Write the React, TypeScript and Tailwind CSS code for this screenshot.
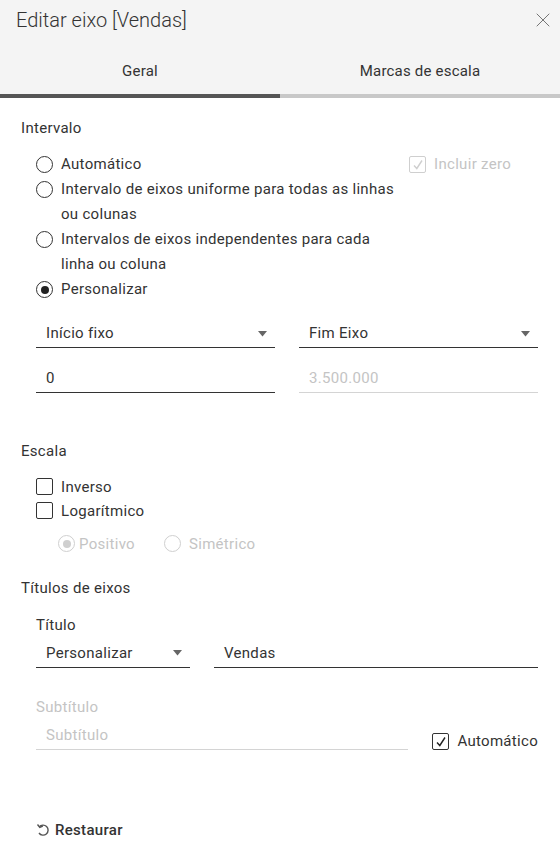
import { X } from "lucide-react";

const font = { fontFamily: "Roboto, 'Liberation Sans', sans-serif" };

function Radio({ checked, disabled }: { checked?: boolean; disabled?: boolean }) {
  return (
    <span
      className={`flex h-[17px] w-[17px] shrink-0 items-center justify-center rounded-full border ${
        disabled ? "border-[#cfcfcf]" : "border-[#333]"
      }`}
    >
      {checked && <span className={`h-[8px] w-[8px] rounded-full ${disabled ? "bg-[#cfcfcf]" : "bg-[#222]"}`} />}
    </span>
  );
}

function Checkbox({ checked, disabled }: { checked?: boolean; disabled?: boolean }) {
  return (
    <span
      className={`flex h-[17px] w-[17px] shrink-0 items-center justify-center rounded-[2px] border ${
        disabled ? "border-[#cfcfcf]" : "border-[#333]"
      }`}
    >
      {checked && (
        <svg width="12" height="12" viewBox="0 0 12 12" fill="none">
          <path d="M2 6.5 L4.8 9.5 L10 1.5" stroke={disabled ? "#cfcfcf" : "#222"} strokeWidth="1.4" />
        </svg>
      )}
    </span>
  );
}

function Caret() {
  return (
    <svg width="9" height="6" viewBox="0 0 9 6" className="shrink-0">
      <path d="M0 0 H9 L4.5 5.5 Z" fill="#666" />
    </svg>
  );
}

function Select({ value, className }: { value: string; className?: string }) {
  return (
    <div className={`flex h-[28px] items-center justify-between border-b border-[#333] pl-[10px] pr-[8px] ${className ?? ""}`}>
      <span className="text-[#333]">{value}</span>
      <Caret />
    </div>
  );
}

export default function App() {
  return (
    <div className="flex h-[858px] w-[560px] flex-col bg-white text-[#333]" style={font}>
      <div className="bg-[#f4f4f4]">
        <div className="flex h-[40px] items-center justify-between pl-[16px] pr-[5px]">
          <h1 className="text-[20px] font-light text-[#333]">Editar eixo [Vendas]</h1>
          <X size={24} strokeWidth={0.9} className="text-[#666]" />
        </div>
        <div className="flex text-[15px] tracking-[0.2px]">
          <div className="flex-1 border-b-4 border-[#555] pt-[20px] pb-[11px] text-center text-[#333]">Geral</div>
          <div className="flex-1 border-b-4 border-[#c8c8c8] pt-[20px] pb-[11px] text-center text-[#333]">Marcas de escala</div>
        </div>
      </div>

      <div className="flex flex-1 flex-col px-[21px] text-[15px] tracking-[0.3px]">
        <div className="mt-[19px]">Intervalo</div>
        <div className="mt-[13px] flex justify-between pl-[15px] pr-[28px]">
          <div className="flex flex-col leading-[25px]">
            <label className="flex items-center gap-[8px]">
              <Radio />
              <span>Automático</span>
            </label>
            <label className="flex items-start gap-[8px]">
              <span className="mt-[4px]"><Radio /></span>
              <span>
                Intervalo de eixos uniforme para todas as linhas
                <br />
                ou colunas
              </span>
            </label>
            <label className="flex items-start gap-[8px]">
              <span className="mt-[4px]"><Radio /></span>
              <span>
                Intervalos de eixos independentes para cada
                <br />
                linha ou coluna
              </span>
            </label>
            <label className="flex items-center gap-[8px]">
              <Radio checked />
              <span>Personalizar</span>
            </label>
          </div>
          <label className="flex h-[25px] items-center gap-[8px] text-[#c4c4c4]">
            <Checkbox checked disabled />
            <span>Incluir zero</span>
          </label>
        </div>

        <div className="mt-[18px] grid grid-cols-2 gap-x-[24px] pl-[15px] pr-[1px]">
          <Select value="Início fixo" />
          <Select value="Fim Eixo" />
          <div className="mt-[17px] flex h-[28px] items-center border-b border-[#333] pl-[10px]">0</div>
          <div className="mt-[17px] flex h-[28px] items-center border-b border-[#d4d4d4] pl-[10px] text-[#c4c4c4]">3.500.000</div>
        </div>

        <div className="mt-[47px]">Escala</div>
        <div className="mt-[12px] flex flex-col pl-[15px] leading-[24px]">
          <label className="flex items-center gap-[8px]">
            <Checkbox />
            <span>Inverso</span>
          </label>
          <label className="flex items-center gap-[8px]">
            <Checkbox />
            <span>Logarítmico</span>
          </label>
          <div className="mt-[9px] flex items-center pl-[22px] text-[#c4c4c4]">
            <label className="flex items-center gap-[4px]">
              <Radio checked disabled />
              <span>Positivo</span>
            </label>
            <label className="ml-[29px] flex items-center gap-[8px]">
              <Radio disabled />
              <span>Simétrico</span>
            </label>
          </div>
        </div>

        <div className="mt-[21px]">Títulos de eixos</div>
        <div className="mt-[15px] pl-[15px] pr-[1px]">
          <div>Título</div>
          <div className="mt-[3px] flex gap-[24px]">
            <Select value="Personalizar" className="w-[154px]" />
            <div className="flex h-[28px] flex-1 items-center border-b border-[#333] pl-[10px]">Vendas</div>
          </div>

          <div className="mt-[28px] text-[#c4c4c4]">Subtítulo</div>
          <div className="mt-[4px] flex items-end gap-[24px]">
            <div className="flex h-[28px] flex-1 items-center border-b border-[#d4d4d4] pl-[10px] text-[#c4c4c4]">Subtítulo</div>
            <label className="flex h-[17px] items-center gap-[8px]">
              <Checkbox checked />
              <span>Automático</span>
            </label>
          </div>
        </div>

        <div className="mt-[69px] flex items-center gap-[5px] pl-[15px]">
          <svg width="14" height="14" viewBox="0 0 14 14" fill="none">
            <path d="M3.2 4 A5 5 0 1 1 3 10" stroke="#555" strokeWidth="1.4" fill="none" />
            <path d="M1.5 1.5 L3.8 4.4 L6.8 3" stroke="#555" strokeWidth="1.4" fill="none" />
          </svg>
          <span className="font-medium">Restaurar</span>
        </div>
      </div>
    </div>
  );
}
